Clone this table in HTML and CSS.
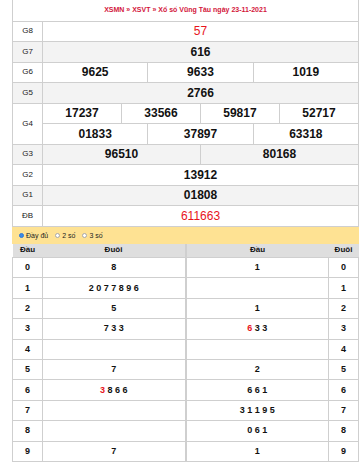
FILE: index.html
```html
<!DOCTYPE html>
<html lang="vi">
<head>
<meta charset="utf-8">
<title>Xổ số Vũng Tàu 23-11-2021</title>
<link rel="stylesheet" href="styles.css">
</head>
<body>
<div class="wrap">
  <table class="kq">
    <colgroup><col class="c-label"><col span="12"></colgroup>
    <tr class="title"><td colspan="13">XSMN » XSVT » Xổ số Vũng Tàu ngày 23-11-2021</td></tr>
    <tr><td class="lb">G8</td><td colspan="12" class="red">57</td></tr>
    <tr class="alt"><td class="lb">G7</td><td colspan="12">616</td></tr>
    <tr><td class="lb">G6</td><td colspan="4">9625</td><td colspan="4">9633</td><td colspan="4">1019</td></tr>
    <tr class="alt"><td class="lb">G5</td><td colspan="12">2766</td></tr>
    <tr><td class="lb" rowspan="2">G4</td><td colspan="3">17237</td><td colspan="3">33566</td><td colspan="3">59817</td><td colspan="3">52717</td></tr>
    <tr><td colspan="4">01833</td><td colspan="4">37897</td><td colspan="4">63318</td></tr>
    <tr class="alt"><td class="lb">G3</td><td colspan="6">96510</td><td colspan="6">80168</td></tr>
    <tr><td class="lb">G2</td><td colspan="12">13912</td></tr>
    <tr class="alt"><td class="lb">G1</td><td colspan="12">01808</td></tr>
    <tr><td class="lb">ĐB</td><td colspan="12" class="red">611663</td></tr>
  </table>
  <div class="opts">
    <span class="opt"><span class="radio on"></span>Đầy đủ</span>
    <span class="opt"><span class="radio"></span>2 số</span>
    <span class="opt"><span class="radio"></span>3 số</span>
  </div>
  <table class="loto">
    <colgroup><col class="c-k"><col><col><col class="c-k2"></colgroup>
    <tr class="hd"><th>Đầu</th><th>Đuôi</th><th class="mid">Đầu</th><th>Đuôi</th></tr>
    <tr><td>0</td><td>8</td><td class="mid">1</td><td>0</td></tr>
    <tr><td>1</td><td>2 0 7 7 8 9 6</td><td class="mid"></td><td>1</td></tr>
    <tr><td>2</td><td>5</td><td class="mid">1</td><td>2</td></tr>
    <tr><td>3</td><td>7 3 3</td><td class="mid"><span class="r">6</span> 3 3</td><td>3</td></tr>
    <tr><td>4</td><td></td><td class="mid"></td><td>4</td></tr>
    <tr><td>5</td><td>7</td><td class="mid">2</td><td>5</td></tr>
    <tr><td>6</td><td><span class="r">3</span> 8 6 6</td><td class="mid">6 6 1</td><td>6</td></tr>
    <tr><td>7</td><td></td><td class="mid">3 1 1 9 5</td><td>7</td></tr>
    <tr><td>8</td><td></td><td class="mid">0 6 1</td><td>8</td></tr>
    <tr><td>9</td><td>7</td><td class="mid">1</td><td>9</td></tr>
  </table>
</div>
</body>
</html>
```
FILE: styles.css
```css
* { box-sizing: border-box; }
html, body { margin: 0; padding: 0; background: #fff; }
body { font-family: "Liberation Sans", Arial, sans-serif; color: #111; }

.wrap { width: 347px; margin-left: 12px; }

table { border-collapse: collapse; width: 100%; table-layout: fixed; }

.kq .c-label { width: 30px; }
.kq td {
  border: 1px solid #cfcfcf;
  height: 20.5px;
  padding: 0;
  text-align: center;
  vertical-align: middle;
  font-size: 12px;
  font-weight: bold;
  line-height: 14px;
}
.kq .title td {
  border-top: 0;
  height: 21px;
  font-size: 7px;
  font-weight: bold;
  color: #d3173c;
}
.kq .lb { font-size: 8px; font-weight: normal; color: #222; }
.kq .alt td { background: #f3f3f3; }
.kq td.red { color: #e8141c; font-weight: normal; }

.opts {
  display: flex;
  align-items: center;
  gap: 7px;
  height: 17px;
  padding-left: 7px;
  background: #fee293;
  font-size: 7px;
  color: #222;
}
.opt { display: flex; align-items: center; gap: 2px; }
.radio {
  width: 5px;
  height: 5px;
  border-radius: 50%;
  border: 1px solid #a8a8a8;
  background: #fff;
}
.radio.on { border-color: #2f78d6; background: #3d8ae6; }

.loto .c-k { width: 30px; }
.loto .c-k2 { width: 30px; }
.loto th {
  background: #dedede;
  height: 14px;
  padding: 0;
  font-size: 8px;
  font-weight: bold;
  line-height: 10px;
  text-align: center;
  border: 0;
}
.loto td {
  border: 1px solid #cfcfcf;
  height: 20.4px;
  padding: 0;
  text-align: center;
  vertical-align: middle;
  font-size: 9px;
  font-weight: bold;
  line-height: 11px;
}
.loto .mid { border-left: 2px solid #cfcfcf; }
.loto .r { color: #e8141c; }
```
